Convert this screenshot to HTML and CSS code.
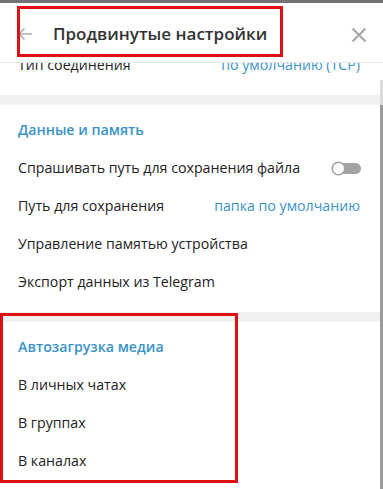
FILE: index.html
```html
<!DOCTYPE html>
<html lang="ru">
<head>
<meta charset="utf-8">
<link rel="stylesheet" href="styles.css">
</head>
<body>
<div class="window">
  <div class="topstrip"></div>
  <header class="header">
    <svg class="back" width="16" height="14" viewBox="0 0 16 14"><path d="M15 7H2M7.5 1.5L2 7l5.5 5.5" fill="none" stroke="#b0b0b0" stroke-width="1.6"/></svg>
    <div class="title">Продвинутые настройки</div>
    <svg class="close" width="16" height="16" viewBox="0 0 16 16"><path d="M1.5 1.5l13 13M14.5 1.5l-13 13" fill="none" stroke="#a6a6a6" stroke-width="2"/></svg>
  </header>
  <div class="viewport">
    <div class="content">
      <section class="section first">
        <div class="row"><span>Тип соединения</span><span class="value">по умолчанию (TCP)</span></div>
      </section>
      <div class="band"></div>
      <section class="section">
        <div class="row heading">Данные и память</div>
        <div class="row"><span>Спрашивать путь для сохранения файла</span>
          <svg class="toggle" width="31" height="15" viewBox="0 0 31 15"><rect x="7" y="2" width="23" height="11" rx="5.5" fill="#a3a3a3"/><circle cx="7.5" cy="7.5" r="6.3" fill="#fff" stroke="#a3a3a3" stroke-width="1.6"/></svg>
        </div>
        <div class="row"><span>Путь для сохранения</span><span class="value">папка по умолчанию</span></div>
        <div class="row">Управление памятью устройства</div>
        <div class="row">Экспорт данных из Telegram</div>
      </section>
      <div class="band"></div>
      <section class="section">
        <div class="row heading">Автозагрузка медиа</div>
        <div class="row">В личных чатах</div>
        <div class="row">В группах</div>
        <div class="row">В каналах</div>
      </section>
    </div>
    <div class="scroll-light"></div>
    <div class="scroll-dark"></div>
  </div>
  <div class="mark mark-title"></div>
  <div class="mark mark-media"></div>
</div>
</body>
</html>
```
FILE: styles.css
```css
* { box-sizing: border-box; }
html, body { margin: 0; padding: 0; background: #fff; }
body {
  width: 383px;
  height: 489px;
  overflow: hidden;
  font-family: "Open Sans", "Noto Sans", sans-serif;
  color: #222;
}
.window { position: relative; width: 383px; height: 489px; display: flex; flex-direction: column; }
.topstrip { height: 3px; background: #727272; flex: none; }
.header {
  height: 60px;
  flex: none;
  display: flex;
  align-items: center;
  border-bottom: 1px solid #e6e6e6;
  padding: 0 16px 0 17px;
  background: #fff;
}
.back { margin-top: 2px; flex: none; }
.title {
  margin-left: 20px;
  font-size: 17px;
  font-weight: 600;
  color: #333;
  flex: 1;
  margin-top: 2px;
}
.close { flex: none; margin-top: 4px; }
.viewport { position: relative; flex: 1; overflow: hidden; }
.content { margin-top: -17.4px; }
.section { padding: 6px 0 11px 0; }
.section.first { padding-top: 0; }
.band { height: 10px; background: #f0f0f0; border-bottom: 1px solid #f6f6f6; }
.row {
  height: 38px;
  line-height: 38px;
  font-size: 14.2px;
  padding: 0 23px 0 18px;
  display: flex;
  justify-content: space-between;
  align-items: center;
  white-space: nowrap;
}
.row.heading { font-weight: 600; color: #3a93c7; }
.value { color: #3a93c7; }
.toggle { margin-right: -2px; margin-top: 1px; }
.scroll-light { position: absolute; left: 380px; top: 17px; width: 3px; height: 25px; background: #dcdcdc; }
.scroll-dark { position: absolute; left: 380px; top: 42px; width: 3px; bottom: 0; background: #9c9c9c; }
.mark { position: absolute; border: 3px solid #dd1016; }
.mark-title { left: 17px; top: 6px; width: 266px; height: 51px; }
.mark-media { left: 0; top: 313px; width: 238px; height: 170px; }
```
